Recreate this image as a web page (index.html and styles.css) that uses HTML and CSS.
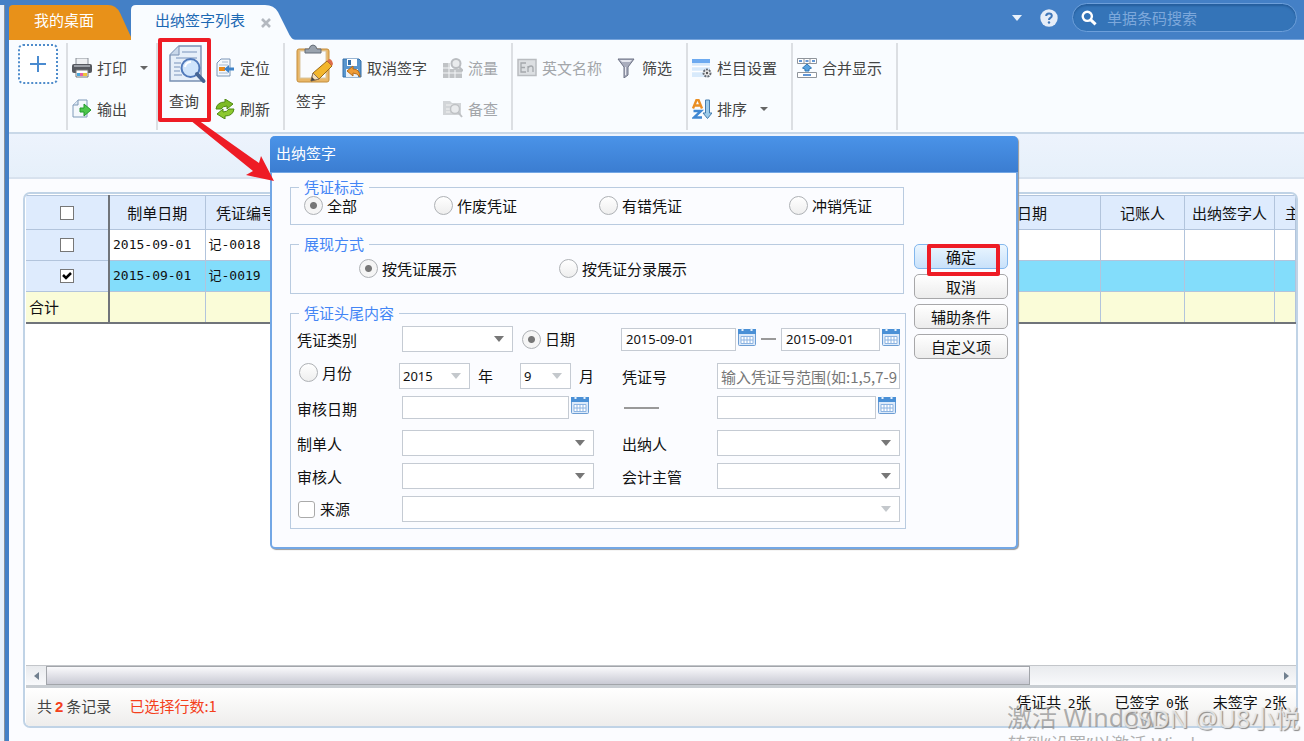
FILE: index.html
```html
<!DOCTYPE html>
<html lang="zh-CN">
<head>
<meta charset="utf-8">
<title>出纳签字列表</title>
<link rel="stylesheet" href="styles.css">
</head>
<body>
<div class="app">
  <aside class="edge"></aside>
  <div class="main">
    <header class="top">
      <nav class="tabs">
        <button class="tab tab-home"><svg class="tab-shape" viewBox="0 0 123 35" preserveAspectRatio="none"><path d="M0 35V4Q0 0 4 0H100Q108 0 112 8L123 32V35Z" fill="#e89119"/></svg><span>我的桌面</span></button>
        <button class="tab tab-active"><svg class="tab-shape" viewBox="0 0 164 35" preserveAspectRatio="none"><path d="M0 35V5Q0 0 5 0H134Q143 0 147 7L157 27Q160 34 164 35Z" fill="#f9fcff"/></svg><span>出纳签字列表</span><svg class="close" viewBox="0 0 10 10"><path d="M1 1L9 9M9 1L1 9" stroke="#b4b9c0" stroke-width="2.6"/></svg></button>
      </nav>
      <div class="tools">
        <svg class="tri" viewBox="0 0 10 6"><path d="M0 0H10L5 6Z" fill="#e9f1fb"/></svg>
        <svg class="help" viewBox="0 0 18 18"><circle cx="9" cy="9" r="8.7" fill="#e6edf8"/><path d="M6.2 7Q6.2 4.4 9 4.4Q11.8 4.4 11.8 6.8Q11.8 8.2 10.2 9Q9 9.6 9 11" fill="none" stroke="#3f76b8" stroke-width="2"/><circle cx="9" cy="13.5" r="1.2" fill="#3f76b8"/></svg>
        <label class="search"><svg viewBox="0 0 16 16"><circle cx="6.3" cy="6.3" r="4.6" fill="none" stroke="#fff" stroke-width="2.4"/><path d="M9.8 9.8L14.6 14.4" stroke="#fff" stroke-width="3"/></svg><input type="text" placeholder="单据条码搜索" aria-label="单据条码搜索"></label>
      </div>
    </header>

    <div class="ribbon">
      <div class="group g-add"><button class="add" aria-label="添加"><svg viewBox="0 0 40 40"><rect x="1" y="1" width="38" height="38" rx="4" fill="#fff" stroke="#4f8ccb" stroke-width="2" stroke-dasharray="2 2"/><path d="M20 12V28M12 20H28" stroke="#4a8bd0" stroke-width="2"/></svg></button></div>
      <div class="group g-print">
        <div class="col">
          <button class="cmd"><svg viewBox="0 0 20 20"><rect x="4" y="0" width="12" height="7" fill="#eef0f3" stroke="#8a8f98"/><rect x="0" y="6" width="20" height="9" rx="2" fill="#55585f"/><rect x="2" y="7" width="16" height="2" fill="#9b9fa6"/><path d="M4 12H16V19H4Z" fill="#fff" stroke="#777"/><path d="M5 15H8V18H5Z" fill="#4aa7dc"/><path d="M8 15H11V18H8Z" fill="#e85fa5"/><path d="M11 15H15V18H11Z" fill="#f0c33a"/></svg><span>打印</span><i class="caret"></i></button>
          <button class="cmd"><svg viewBox="0 0 20 20"><path d="M1 6L6 1H15V18H1Z" fill="#f4f8fc" stroke="#7f9ab8"/><path d="M1 6H6V1" fill="#dbe6f1" stroke="#7f9ab8"/><path d="M8 9H12V5L19 11L12 17V13H8Z" fill="#4cc64a" stroke="#229a2c"/></svg><span>输出</span></button>
        </div>
      </div>
      <div class="group g-query">
        <button class="big"><svg viewBox="0 0 36 38"><path d="M1 10L10 1H32V36H1Z" fill="#e6eff9" stroke="#7890b2" stroke-width="1.4"/><path d="M1 10H10V1" fill="#c9d8ea" stroke="#7890b2"/><path d="M13 7H28M7 13H28M5 18H12M5 22H11M5 26H11M5 30H13" stroke="#9db3d0" stroke-width="1.6"/><circle cx="21.500" cy="23" r="9" fill="#cfe4fb" stroke="#5079ba" stroke-width="2"/><path d="M16 22Q17 17 22 17" stroke="#fff" stroke-width="2" fill="none"/><path d="M28 29L34.500 36" stroke="#456594" stroke-width="4" stroke-linecap="round"/></svg><span>查询</span></button>
        <div class="col">
          <button class="cmd"><svg viewBox="0 0 20 20"><path d="M2 5L6 1H15V18H2Z" fill="#f5f9fd" stroke="#7c97b8"/><path d="M7 4H13M4 7H13M4 15H13" stroke="#a7bbd2"/><rect x="4" y="9" width="6" height="4" fill="#e88a1c"/><path d="M9 11L14 7V9.500H19V12.500H14V15Z" fill="#3f83c8"/></svg><span>定位</span></button>
          <button class="cmd"><svg viewBox="0 0 20 20"><path d="M1 10Q2 3 10 3V0L18 5L12 10V7Q8 7 6 10Z" fill="#7dbb25" stroke="#4f8a12"/><path d="M19 10Q18 17 10 17V20L2 15L8 10V13Q12 13 14 10Z" fill="#8dc92f" stroke="#4f8a12"/></svg><span>刷新</span></button>
        </div>
        <div class="mark mark-query"></div>
      </div>
      <div class="group g-sign">
        <button class="big"><svg viewBox="0 0 36 38"><rect x="1" y="4" width="32" height="33" rx="2" fill="#e9b768" stroke="#c48d3b"/><rect x="4" y="6" width="26" height="27" fill="#fafbfd" stroke="#d9c6a0"/><path d="M9 8V4H13Q14 0 17 0Q20 0 21 4H25V8Z" fill="#9aa3ae" stroke="#646d78"/><path d="M15 36L17 28L31 16L36 21L23 34Z" fill="#f3b62c" stroke="#9b6a18"/><path d="M31 16L33 14Q36 14 37 19L36 21Z" fill="#dc6d4b"/><path d="M15 36L17 28L23 34Z" fill="#f4dfbb" stroke="#8b735a"/><path d="M15 36L16 32L19 35Z" fill="#444"/></svg><span>签字</span></button>
        <div class="col">
          <button class="cmd"><svg viewBox="0 0 20 20"><path d="M1 1H17L19 3V19H1Z" fill="#5896cf" stroke="#346fa8"/><rect x="5" y="1" width="10" height="7" fill="#fff"/><rect x="6" y="2" width="3" height="5" fill="#346fa8"/><rect x="4" y="11" width="12" height="8" fill="#e9f1f9"/><path d="M5 13L11 8V11Q18 11 18 19Q15 15 11 15V18Z" fill="#ef9b35" stroke="#b66b17"/></svg><span>取消签字</span></button>
        </div>
        <div class="col">
          <button class="cmd" disabled><svg viewBox="0 0 20 20"><path d="M0 5H7V11H19V20H0Z" fill="#c0c3c6"/><path d="M0 10H8M0 15H19M6 5V20M12 12V20" stroke="#f4f6f8"/><circle cx="13" cy="5.500" r="4.500" fill="#e9ebed" stroke="#babdc1" stroke-width="2"/><path d="M16 9L20 13" stroke="#babdc1" stroke-width="2"/></svg><span>流量</span></button>
          <button class="cmd" disabled><svg viewBox="0 0 20 20"><path d="M0 2H7L9 4H18V16H0Z" fill="#d2d5d8"/><path d="M3 6H10M3 10H7M3 13H7" stroke="#f3f3f3"/><circle cx="12" cy="10" r="4.500" fill="#e9ebed" stroke="#bfc2c5" stroke-width="1.500"/><path d="M15 13L19 18" stroke="#bfc2c5" stroke-width="2"/></svg><span>备查</span></button>
        </div>
      </div>
      <div class="group g-name">
        <div class="col"><button class="cmd" disabled><svg viewBox="0 0 20 20"><rect x="1" y="1.500" width="18" height="16" fill="#dcdfe2" stroke="#b9bcc0" stroke-width="1.500"/><path d="M9 5H4V14H9M4 9.500H8M11 14V8M11 10Q12 8 14 8Q16 8 16 10V14" fill="none" stroke="#a4a8ac" stroke-width="1.300"/></svg><span>英文名称</span></button></div>
        <div class="col"><button class="cmd"><svg viewBox="0 0 20 20"><path d="M1 1H17L11 9V17L7 20V9Z" fill="#a9adbd" stroke="#6d7285"/><path d="M3 2H15L13 4H5Z" fill="#e4e6ee"/><path d="M8.500 9V17" stroke="#e8e9f0"/></svg><span>筛选</span></button></div>
      </div>
      <div class="group g-cols">
        <div class="col">
          <button class="cmd"><svg viewBox="0 0 20 20"><rect x="0" y="1" width="18" height="18" fill="#d8eafb"/><rect x="0" y="1" width="18" height="4" fill="#6daaf0"/><path d="M0 8.500H18M0 13.500H18" stroke="#fff" stroke-width="1.500"/><circle cx="15" cy="15" r="3.500" fill="#eee" stroke="#666b73" stroke-width="2" stroke-dasharray="2 1"/><circle cx="15" cy="15" r="1.200" fill="#555"/></svg><span>栏目设置</span></button>
          <button class="cmd"><svg viewBox="0 0 20 20"><path d="M1 9.500L4.500 1H6.500L10 9.500M3 6.500H8" fill="none" stroke="#ea8f24" stroke-width="2.400"/><path d="M1.500 12H9L2 18.500H10" fill="none" stroke="#3f87d2" stroke-width="2.400"/><path d="M13.500 1H17.500V14H20L15.500 19.500L11 14H13.500Z" fill="#9dcbe9" stroke="#447cae"/></svg><span>排序</span><i class="caret"></i></button>
        </div>
      </div>
      <div class="group g-merge">
        <div class="col"><button class="cmd"><svg viewBox="0 0 20 20"><path d="M.5.5H19.500V5.500H.5ZM7 .5V5.500M13 .5V5.500M.5 14.500H19.500V19.500H.5Z" fill="#fff" stroke="#8f949b"/><path d="M2 3H5M8.500 3H11.500M15 3H18M6 17H14" stroke="#2f74c7" stroke-width="1.600"/><path d="M10 6L14.500 10L12 11V13H8V11L5.500 10Z" fill="#57a2df" stroke="#2f76b5"/></svg><span>合并显示</span></button></div>
      </div>
    </div>

    <div class="subbar"></div>

    <main class="content">
      <section class="panel">
        <div class="table-wrap">
          <table class="list">
            <colgroup><col class="c-check"><col class="c-date"><col class="c-no"><col><col class="c-audit"><col class="c-book"><col class="c-cash"><col class="c-chief"></colgroup>
            <thead><tr><th><input type="checkbox" aria-label="全选"></th><th>制单日期</th><th>凭证编号</th><th></th><th>审核日期</th><th>记账人</th><th>出纳签字人</th><th class="clip">主</th></tr></thead>
            <tbody>
              <tr><th><input type="checkbox" aria-label="记-0018"></th><td>2015-09-01</td><td>记-0018</td><td></td><td></td><td></td><td></td><td></td></tr>
              <tr class="selected"><th><input type="checkbox" aria-label="记-0019" checked></th><td>2015-09-01</td><td>记-0019</td><td></td><td></td><td></td><td></td><td></td></tr>
            </tbody>
            <tfoot><tr><td class="total">合计</td><td></td><td></td><td></td><td></td><td></td><td></td><td></td></tr></tfoot>
          </table>
        </div>
        <div class="scroll"><button aria-label="向左"><svg viewBox="0 0 5 8"><path d="M5 0V8L0 4Z" fill="#71808f"/></svg></button><div class="track"><div class="thumb"></div></div><button aria-label="向右"><svg viewBox="0 0 5 8"><path d="M0 0V8L5 4Z" fill="#71808f"/></svg></button></div>
        <footer class="status">
          <div class="count"><span>共<b>2</b>条记录</span><span class="picked">已选择行数:1</span></div>
          <div class="sums"><span>凭证共 <em>2</em>张</span><span>已签字 <em>0</em>张</span><span>未签字 <em>2</em>张</span></div>
        </footer>
      </section>
    </main>
  </div>

  <form class="dialog" role="dialog" aria-labelledby="dlg-title">
    <h2 id="dlg-title">出纳签字</h2>
    <div class="dialog-body">
      <div class="sections">
        <fieldset class="box box-flag"><legend>凭证标志</legend>
          <div class="options">
            <label><input type="radio" name="flag" checked>全部</label>
            <label><input type="radio" name="flag">作废凭证</label>
            <label><input type="radio" name="flag">有错凭证</label>
            <label><input type="radio" name="flag">冲销凭证</label>
          </div>
        </fieldset>
        <fieldset class="box box-view"><legend>展现方式</legend>
          <div class="options">
            <label><input type="radio" name="view" checked>按凭证展示</label>
            <label><input type="radio" name="view">按凭证分录展示</label>
          </div>
        </fieldset>
        <fieldset class="box box-fields"><legend>凭证头尾内容</legend>
          <div class="row">
            <label class="name" for="kind">凭证类别</label>
            <div class="cell"><select id="kind" class="w-kind"><option></option></select><label class="pick day"><input type="radio" name="period" checked>日期</label></div>
            <div class="cell range">
              <input class="w-from" type="text" value="2015-09-01" aria-label="开始日期"><svg class="cal"><use href="#cal"/></svg>
              <span class="dash"></span>
              <input class="w-to" type="text" value="2015-09-01" aria-label="结束日期"><svg class="cal"><use href="#cal"/></svg>
            </div>
          </div>
          <div class="row spaced">
            <label class="pick month"><input type="radio" name="period">月份</label>
            <div class="cell"><select id="year" class="w-year" disabled><option>2015</option></select><label class="unit" for="year">年</label><select id="mon" class="w-mon" disabled><option>9</option></select><label class="unit" for="mon">月</label></div>
            <label class="name" for="no">凭证号</label>
            <input id="no" class="hint" type="text" placeholder="输入凭证号范围(如:1,5,7-9">
          </div>
          <div class="row short">
            <label class="name" for="audit">审核日期</label>
            <div class="cell"><input id="audit" class="w-audit" type="text"><svg class="cal"><use href="#cal"/></svg></div>
            <span class="dash long"></span>
            <div class="cell"><input class="grow" type="text" aria-label="审核结束日期"><svg class="cal cal-end"><use href="#cal"/></svg></div>
          </div>
          <div class="row spaced">
            <label class="name" for="maker">制单人</label>
            <div class="cell"><select id="maker" class="w-person"><option></option></select></div>
            <label class="name" for="cashier">出纳人</label>
            <select id="cashier"><option></option></select>
          </div>
          <div class="row">
            <label class="name" for="auditor">审核人</label>
            <div class="cell"><select id="auditor" class="w-person"><option></option></select></div>
            <label class="name" for="chief">会计主管</label>
            <select id="chief"><option></option></select>
          </div>
          <div class="row">
            <label class="pick source"><input type="checkbox">来源</label>
            <select class="wide" aria-label="来源" disabled><option></option></select>
          </div>
        </fieldset>
      </div>
      <div class="actions">
        <button type="button" class="ok">确定<span class="mark mark-ok"></span></button>
        <button type="button">取消</button>
        <button type="button">辅助条件</button>
        <button type="button">自定义项</button>
      </div>
    </div>
  </form>

  <svg class="arrow" viewBox="0 0 86 62"><path d="M2 0H10L71 43L73 36L86 61L58 55L65 51Z" fill="#ee1c25"/></svg>
  <p class="wm wm-title">激活 Windows</p>
  <p class="wm wm-sub">转到“设置”以激活 Windows</p>
  <p class="wm wm-site">CSDN @U8小悦</p>
</div>
<svg class="defs" aria-hidden="true"><symbol id="cal" viewBox="0 0 18 18"><rect x=".5" y="1.500" width="17" height="16" rx="1" fill="#dceafa" stroke="#6c9dd3"/><path d="M0 1H18V6H0Z" fill="#4a90d6"/><path d="M4.500 0V3M13.500 0V3" stroke="#e8f2fc" stroke-width="2"/><path d="M3 8.500H15V15.500H3ZM3 12H15M6 8.500V15.500M9 8.500V15.500M12 8.500V15.500" fill="#fff" stroke="#8db4e2"/></symbol></svg>
</body>
</html>
```
FILE: styles.css
```css
* { box-sizing: border-box; }
body { margin: 0; font: 15px/20px "Noto Sans CJK SC", sans-serif; color: #111; }
button, input, select { font: inherit; color: inherit; margin: 0; }
button { border: 0; background: none; padding: 0; }
.defs { position: absolute; width: 0; height: 0; }
.app { position: relative; display: flex; min-height: 100vh; overflow: hidden; background: #4480c6; }
.edge { flex: none; width: 5px; margin: 5px 4px 0 0; background: #e8f1fb; border-right: 1px solid #8a9199; }
.main { flex: 1; min-width: 0; display: flex; flex-direction: column; }

/* header */
.top { display: flex; justify-content: space-between; align-items: flex-start; height: 40px; padding: 3px 7px 0 0; border-bottom: 1px solid #78a5dc; }
.tabs { display: flex; padding-top: 2px; }
.tab { position: relative; display: flex; align-items: center; height: 35px; line-height: 30px; }
.tab span { position: relative; padding-bottom: 6px; }
.tab-shape { position: absolute; inset: 0; width: 100%; height: 100%; }
.tab-home { width: 122px; padding-left: 25px; color: #fff; }
.tab-active { width: 164px; padding-left: 24px; gap: 16px; color: #1b68b3; }
.close { position: relative; width: 10px; height: 10px; }
.tools { display: flex; align-items: center; height: 29px; }
.tri { width: 10px; height: 6px; margin-right: 18px; }
.help { width: 18px; height: 18px; margin-right: 14px; }
.search { display: flex; align-items: center; gap: 10px; width: 225px; height: 29px; padding-left: 8px; border: 1px solid #6d9fda; border-radius: 15px; background: #3474b8; box-shadow: inset 0 2px 2px #255e9d; }
.search svg { width: 16px; height: 16px; }
.search input { flex: 1; min-width: 0; border: 0; outline: 0; padding: 0; background: none; }
.search input::placeholder { color: #7da8db; opacity: 1; }

/* ribbon */
.ribbon { display: flex; height: 94px; padding: 3px 0 2px; background: #f9fcff; border-bottom: 2px solid #c9d8e8; }
.group { position: relative; display: flex; border-right: 2px solid #dcdfe3; }
.g-add { width: 59px; padding: 1px 0 0 9px; }
.g-print { width: 90px; padding-left: 4px; }
.g-query { width: 127px; padding-left: 11px; gap: 10px; }
.g-sign { width: 228px; padding-left: 11px; gap: 10px; }
.g-name { width: 175px; padding-left: 4px; gap: 15px; }
.g-cols, .g-merge { width: 105px; padding-left: 4px; }
.g-sign .col + .col { margin-left: 6px; }
.add svg { display: block; width: 40px; height: 40px; }
.add { align-self: flex-start; }
.col { display: flex; flex-direction: column; padding-top: 4px; }
.cmd { display: flex; align-items: center; gap: 5px; height: 42px; color: #444; white-space: nowrap; }
.cmd svg { width: 20px; height: 20px; }
.cmd:disabled { color: #a3a6aa; }
.caret { margin-left: 8px; border: 4px solid transparent; border-top-color: #666; border-bottom: 0; }
.big { display: flex; flex-direction: column; align-items: flex-start; align-self: flex-start; gap: 8px; padding-top: 2px; color: #444; }
.big svg { width: 36px; height: 38px; overflow: visible; }

.mark { position: absolute; border: 4px solid #ee1c25; border-radius: 2px; }
.mark-query { left: 0; top: -5px; width: 53px; height: 84px; }
.mark-ok { left: 12px; top: -1px; width: 73px; height: 32px; }
.subbar { height: 45px; background: linear-gradient(#edf3fd, #e6f0fa); border-bottom: 2px solid #d8e2ee; }

/* list */
.content { flex: 1; display: flex; padding: 13px 6px 13px 14px; background: #fbfcff; }
.panel { flex: 1; min-width: 0; display: flex; flex-direction: column; border: 2px solid #c0d3e6; border-radius: 7px; background: #fff; padding: 1px 0 0 1px; overflow: hidden; }
.table-wrap { flex: 1; overflow: hidden; }
.list { width: 100%; table-layout: fixed; border-collapse: collapse; border-bottom: 2px solid #70747a; }
.list th, .list td { height: 31px; padding: 0; border: 1px solid #b2c4dc; font-weight: 400; white-space: nowrap; overflow: hidden; }
.list thead th { height: 34px; background: #deebfd; }
.list tr > :first-child { border-right: 2px solid #70747a; border-left: 0; }
.list tbody th { background: #deebfd; }
.list tbody td { padding-left: 3px; font-family: "DejaVu Sans Mono", "Noto Sans CJK SC", monospace; font-size: 13px; }
.list tfoot td { background: #fafcd8; }
.list .total { padding-left: 3px; }
.list .clip { padding-left: 10px; text-align: left; text-overflow: clip; }
.selected td { background: #83ddfb; }
.list input { appearance: none; display: block; width: 14px; height: 14px; margin: 0 auto; border: 1px solid #777; background: #fff; }
.list input:checked { background: #fff url("data:image/svg+xml,%3Csvg xmlns='http://www.w3.org/2000/svg' viewBox='0 0 12 12'%3E%3Cpath d='M2 5L5 8L10 3' fill='none' stroke='black' stroke-width='2.500'/%3E%3C/svg%3E"); }
.c-check { width: 83px; } .c-date { width: 96px; } .c-no { width: 82px; } .c-audit { width: 167px; }
.c-book { width: 84px; } .c-cash { width: 90px; } .c-chief { width: 21px; }
.scroll { display: flex; height: 23px; border-top: 1px solid #c3c6ca; border-bottom: 3px solid #c8cdd2; background: linear-gradient(#e9ebee, #f8f9fb); }
.scroll button { width: 20px; display: grid; place-items: center; }
.scroll svg { width: 5px; height: 8px; }
.track { flex: 1; display: flex; }
.thumb { width: 80%; border: 1px solid #a2a5aa; background: linear-gradient(#fafafc, #c9cad4); }
.status { display: flex; justify-content: space-between; height: 38px; padding: 4px 9px 0 11px; background: linear-gradient(#fff, #eeedec); }
.count { display: flex; gap: 18px; padding-top: 4px; color: #444; }
.count b { padding: 0 3px; font: bold 15px/20px "Liberation Sans", sans-serif; color: #f4401c; }
.picked { color: #f4401c; }
.sums { display: flex; gap: 24px; }
.sums em { padding-left: 3px; font: 13px/20px "DejaVu Sans Mono", monospace; }

/* dialog */
.dialog { position: absolute; left: 270px; top: 136px; width: 748px; background: #fbfcff; border: 2px solid #73a7e5; border-top: 0; border-radius: 5px; box-shadow: 1px 1px 1px #999; }
.dialog h2 { height: 37px; margin: 0 -2px; padding-left: 6px; font: inherit; line-height: 34px; color: #fff; background: linear-gradient(#4a93e8, #3b7dd1); border-bottom: 1px solid #73a7e5; border-radius: 5px 5px 0 0; }
.dialog-body { display: grid; grid-template-columns: 1fr 94px; gap: 8px; padding: 5px 8px 18px 18px; }
.sections { display: flex; flex-direction: column; gap: 10px; min-width: 0; }
.box { min-width: 0; margin: 0; padding: 0; border: 1px solid #b9cbe0; }
.box legend { margin-left: 8px; padding: 0 5px; line-height: 18px; color: #4385f5; }
.box-flag, .box-view { margin-right: 2px; }
.options { display: grid; }
.box-flag .options { grid-template-columns: 130px 165px 190px 1fr; padding: 0 0 9px 13px; }
.box-view .options { grid-template-columns: 200px 1fr; padding: 6px 0 15px 68px; }
.box label { display: flex; align-items: center; white-space: nowrap; }
.options label, .box .pick { gap: 4px; height: 19px; }
.box input[type="radio"] { appearance: none; flex: none; width: 19px; height: 19px; border: 1px solid #aeb1b5; border-radius: 50%; background: linear-gradient(#fff, #eee); }
.box input[type="radio"]:checked { background: radial-gradient(circle, #777 0 3px, #f5f5f5 4px); }
.box input[type="checkbox"] { appearance: none; width: 17px; height: 17px; border: 1px solid #aaa; border-radius: 3px; background: #fff; }
.box-fields .options, .box-fields { padding: 0; }
.box-fields { padding: 4px 5px 6px; }
.box-fields legend { margin-left: 3px; }
.row { display: grid; grid-template-columns: 106px 219px 96px 1fr; align-items: center; height: 26px; margin-bottom: 7px; }
.row:last-child { margin-bottom: 0; }
.spaced { margin-top: 11px; }
.short { height: 23px; }
.name { padding: 2px 0 0 1px; }
.cell { display: flex; align-items: center; gap: 2px; min-width: 0; }
.range { grid-column: 3 / 5; }
.wide { grid-column: 2 / 5; }
.row select, .row input[type="text"] { min-width: 0; width: 100%; height: 26px; border: 1px solid #c5cbd3; border-radius: 0; outline: 0; background: #fff; color: #111; opacity: 1; font: 13px/20px "Noto Sans", "Noto Sans CJK SC", sans-serif; padding: 0 4px; }
.row select { appearance: none; padding: 0 3px; background: #fff url("data:image/svg+xml,%3Csvg xmlns='http://www.w3.org/2000/svg' viewBox='0 0 10 6'%3E%3Cpath d='M0 0H10L5 6Z' fill='%23777'/%3E%3C/svg%3E") no-repeat right 8px top 9px / 10px 6px; }
.row select:disabled { background-image: url("data:image/svg+xml,%3Csvg xmlns='http://www.w3.org/2000/svg' viewBox='0 0 10 6'%3E%3Cpath d='M0 0H10L5 6Z' fill='%23c4c8cc'/%3E%3C/svg%3E"); }
.row input[type="text"] { height: 23px; }
.row input.hint[type="text"] { height: 26px; padding: 0 2px 0 3px; font: 15px/20px "Noto Sans CJK SC", sans-serif; }
.hint::placeholder { color: #777; opacity: 1; }
.row .w-kind { width: 111px; } .row .w-year { width: 71px; } .row .w-mon { width: 51px; }
.row input.w-from[type="text"] { width: 115px; } .row input.w-to[type="text"] { width: 99px; }
.row input.w-audit[type="text"] { width: 167px; } .row .w-person { width: 192px; }
.row .grow { flex: 1; }
.day { margin-left: 7px; }
.month { align-self: start; padding-left: 3px; }
.w-year { margin-left: -3px; }
.unit { width: 46px; padding-left: 6px; }
.box .source { gap: 5px; padding-left: 2px; }
.cal { flex: none; width: 18px; height: 18px; margin-bottom: 5px; }
.cal-end { margin-right: 4px; }
.dash { width: 15px; height: 2px; margin: 0 auto; background: #999; }
.long { width: 35px; margin: 0 0 0 3px; }
.actions { display: flex; flex-direction: column; gap: 5px; padding-top: 66px; }
.actions button { position: relative; height: 25px; border: 1px solid #a7a7a9; border-radius: 5px; background: linear-gradient(#fff, #ececec); line-height: 24px; }
.actions .ok { border-color: #83b7ed; background: linear-gradient(#ebf6ff, #c8e1fa); }
.mark-ok { z-index: 1; }

/* annotation and watermarks float above the window */
.arrow { position: absolute; left: 188px; top: 120px; width: 86px; height: 62px; }
.wm { position: absolute; margin: 0; white-space: nowrap; color: rgba(125, 125, 125, .6); pointer-events: none; }
.wm-title { left: 1007px; bottom: 8px; font: 25px/32px "Noto Sans", "Noto Sans CJK SC", sans-serif; }
.wm-sub { left: 1008px; bottom: -15px; font: 18px/24px "Noto Sans", "Noto Sans CJK SC", sans-serif; }
.wm-site { right: 4px; bottom: 8px; font: 25px/30px "Noto Sans", "Noto Sans CJK SC", sans-serif; color: rgba(235, 235, 235, .85); text-shadow: 1px 1px 1px #888; }
```
